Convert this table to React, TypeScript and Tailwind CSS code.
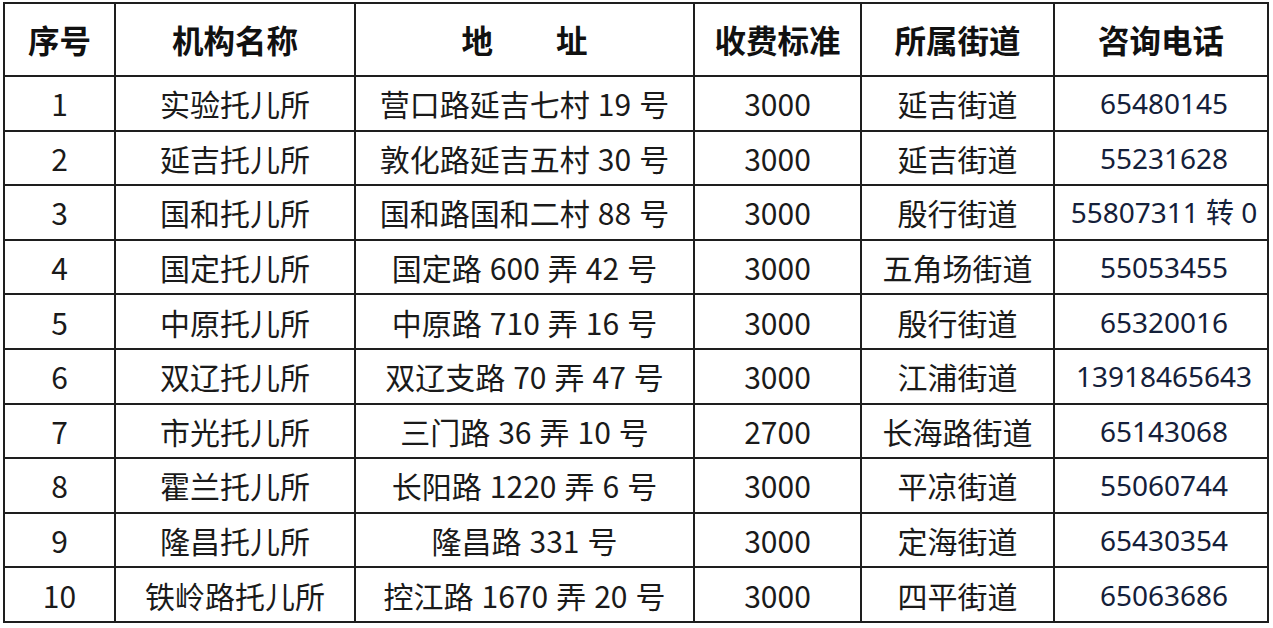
const cols = [111, 240, 339, 167, 193, 214];

const head = ["序号", "机构名称", "地\u3000\u3000址", "收费标准", "所属街道", "咨询电话"];

const rows: [string, string, string, string, string, string][] = [
  ["1", "实验托儿所", "营口路延吉七村 19 号", "3000", "延吉街道", "65480145"],
  ["2", "延吉托儿所", "敦化路延吉五村 30 号", "3000", "延吉街道", "55231628"],
  ["3", "国和托儿所", "国和路国和二村 88 号", "3000", "殷行街道", "55807311 转 0"],
  ["4", "国定托儿所", "国定路 600 弄 42 号", "3000", "五角场街道", "55053455"],
  ["5", "中原托儿所", "中原路 710 弄 16 号", "3000", "殷行街道", "65320016"],
  ["6", "双辽托儿所", "双辽支路 70 弄 47 号", "3000", "江浦街道", "13918465643"],
  ["7", "市光托儿所", "三门路 36 弄 10 号", "2700", "长海路街道", "65143068"],
  ["8", "霍兰托儿所", "长阳路 1220 弄 6 号", "3000", "平凉街道", "55060744"],
  ["9", "隆昌托儿所", "隆昌路 331 号", "3000", "定海街道", "65430354"],
  ["10", "铁岭路托儿所", "控江路 1670 弄 20 号", "3000", "四平街道", "65063686"],
];

const cjk = "font-['Noto_Sans_CJK_SC',sans-serif]";

// SimSun-style half-width gaps are a bit wider than a normal space
function Spaced({ text }: { text: string }) {
  const parts = text.split(" ");
  return (
    <>
      {parts.map((p, i) => (
        <span key={i}>
          {i > 0 && <span className="inline-block w-[8px]" />}
          {p}
        </span>
      ))}
    </>
  );
}

export default function App() {
  return (
    <div className="h-[628px] w-[1273px] overflow-hidden bg-white">
      <table className={`ml-[3px] mt-[2px] w-[1266px] table-fixed border-collapse ${cjk}`}>
        <colgroup>
          {cols.map((w, i) => (
            <col key={i} style={{ width: w }} />
          ))}
        </colgroup>
        <thead>
          <tr className="h-[73px]">
            {head.map((h) => (
              <th
                key={h}
                className="border-2 border-[#1e1e1e] p-0 text-center align-middle text-[31.5px] font-bold leading-none text-[#111]"
              >
                {h}
              </th>
            ))}
          </tr>
        </thead>
        <tbody>
          {rows.map((r) => (
            <tr key={r[0]} className="h-[54.6px]">
              {r.map((c, i) => (
                <td
                  key={i}
                  className={
                    i === 5
                      ? "whitespace-nowrap border-2 border-[#1e1e1e] p-0 pl-[6px] text-center align-middle font-['Noto_Sans','Noto_Sans_CJK_SC',sans-serif] text-[28px] leading-none text-[#14203a]"
                      : "whitespace-nowrap border-2 border-[#1e1e1e] p-0 text-center align-middle text-[30px] font-normal leading-none text-[#1a1a1a]"
                  }
                >
                  {i === 2 ? <Spaced text={c} /> : c}
                </td>
              ))}
            </tr>
          ))}
        </tbody>
      </table>
    </div>
  );
}
